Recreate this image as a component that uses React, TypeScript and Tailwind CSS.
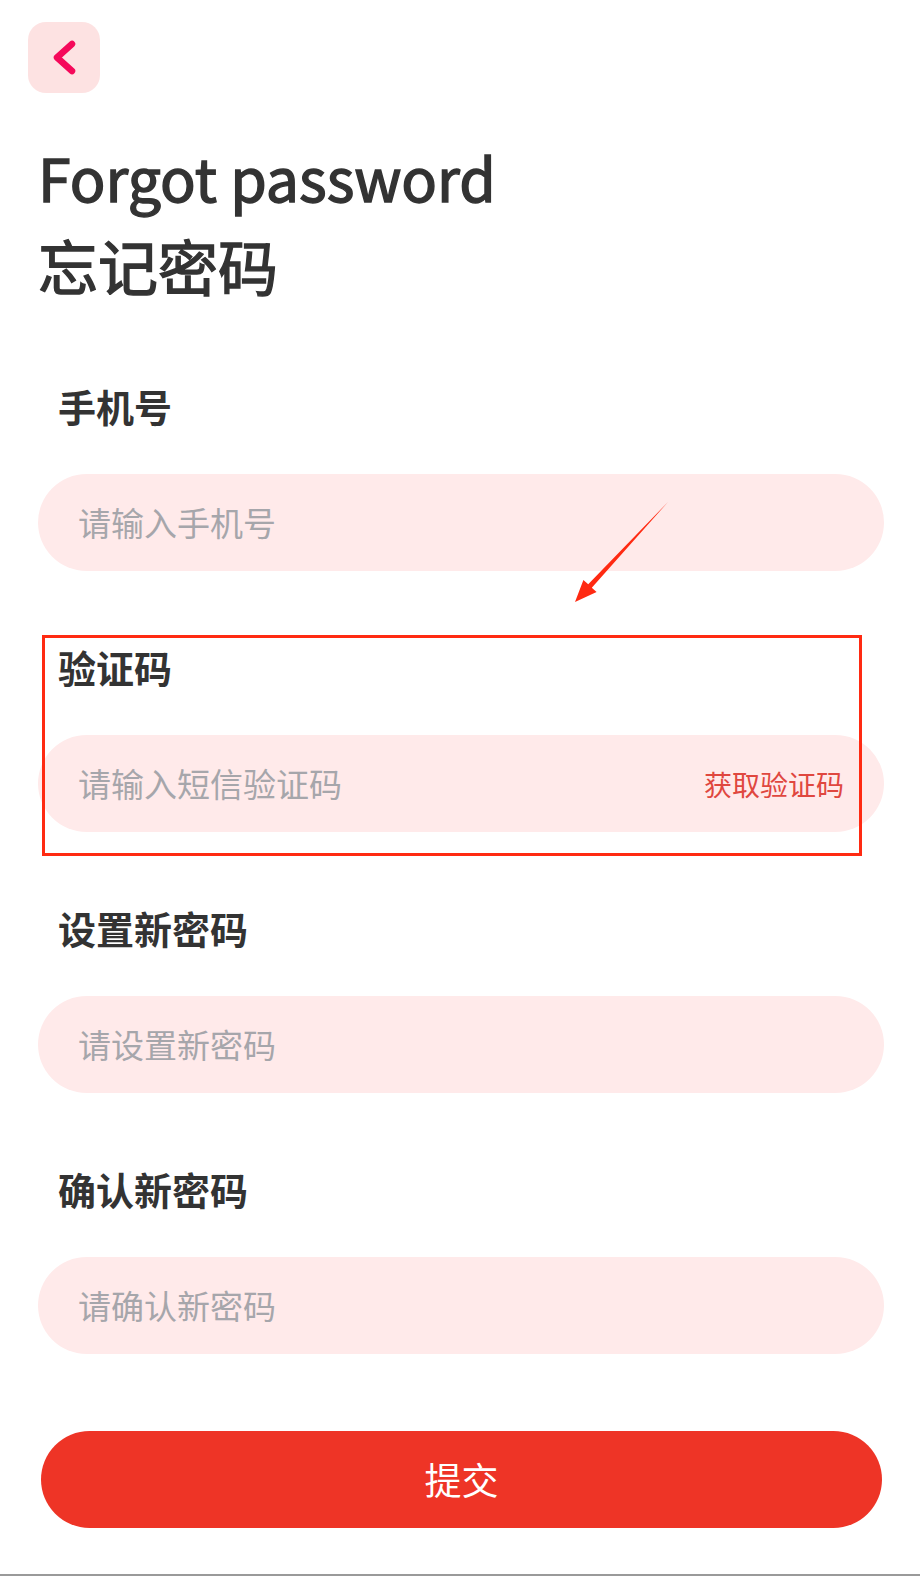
import { useState } from 'react';

type Field = {
  key: string;
  label: string;
  placeholder: string;
  code?: boolean;
};

const fields: Field[] = [
  { key: 'phone', label: '手机号', placeholder: '请输入手机号' },
  { key: 'code', label: '验证码', placeholder: '请输入短信验证码', code: true },
  { key: 'password', label: '设置新密码', placeholder: '请设置新密码' },
  { key: 'confirm', label: '确认新密码', placeholder: '请确认新密码' },
];

export default function App() {
  const [values, setValues] = useState<Record<string, string>>({});

  return (
    <div className="relative h-[1576px] w-full bg-white border-b-2 border-[#9a9a9a] font-['Noto_Sans_CJK_SC',sans-serif] text-[#333333]">
      {/* 返回 */}
      <div className="pt-[22px] pl-[28px]">
        <button className="flex h-[71px] w-[72px] items-center justify-center rounded-[18px] bg-[#fde2e2]">
          <svg width="72" height="71" viewBox="0 0 72 71" fill="none">
            <path d="M44 22 L29 35.5 L44 49" stroke="#f5095a" strokeWidth="6.5" strokeLinecap="round" strokeLinejoin="round" />
          </svg>
        </button>
      </div>

      {/* 标题 */}
      <h1 className="mt-[40px] pl-[38px] font-normal [-webkit-text-stroke:1.4px_#333333]">
        <span className="block text-[59px] leading-[88px]">Forgot password</span>
        <span className="block text-[60px] leading-[88px]">忘记密码</span>
      </h1>

      {/* 表单 */}
      <div className="mt-[78px] pl-[38px] pr-[36px] flex flex-col gap-[77px]">
        {fields.map((f) => (
          <div key={f.key}>
            <div className="pl-[20px] text-[38px] leading-[38px] font-bold">{f.label}</div>
            <div className="mt-[49px] flex h-[97px] items-center rounded-full bg-[#ffeaea] pl-[40px] pr-[40px]">
              <input
                className="flex-1 min-w-0 bg-transparent text-[33px] text-[#333] outline-none placeholder:text-[#a6a6ab]"
                placeholder={f.placeholder}
                value={values[f.key] ?? ''}
                onChange={(e) => setValues({ ...values, [f.key]: e.target.value })}
                type={f.key === 'password' || f.key === 'confirm' ? 'password' : 'text'}
              />
              {f.code && <button className="text-[28px] text-[#e0473f]">获取验证码</button>}
            </div>
          </div>
        ))}

        <button className="ml-[3px] mr-[2px] h-[97px] rounded-full bg-[#ee3426] text-[37px] text-white">
          提交
        </button>
      </div>

      {/* 标注 */}
      <div className="pointer-events-none absolute left-[42px] top-[635px] h-[221px] w-[820px] border-[3px] border-[#ff2a12]" />
      <svg className="pointer-events-none absolute left-0 top-0" width="920" height="1576" viewBox="0 0 920 1576">
        <polygon points="668,502 591.8,587.7 596.6,592.1 575,602 583.4,579.9 588.2,584.3" fill="#ff2a12" />
      </svg>
    </div>
  );
}
